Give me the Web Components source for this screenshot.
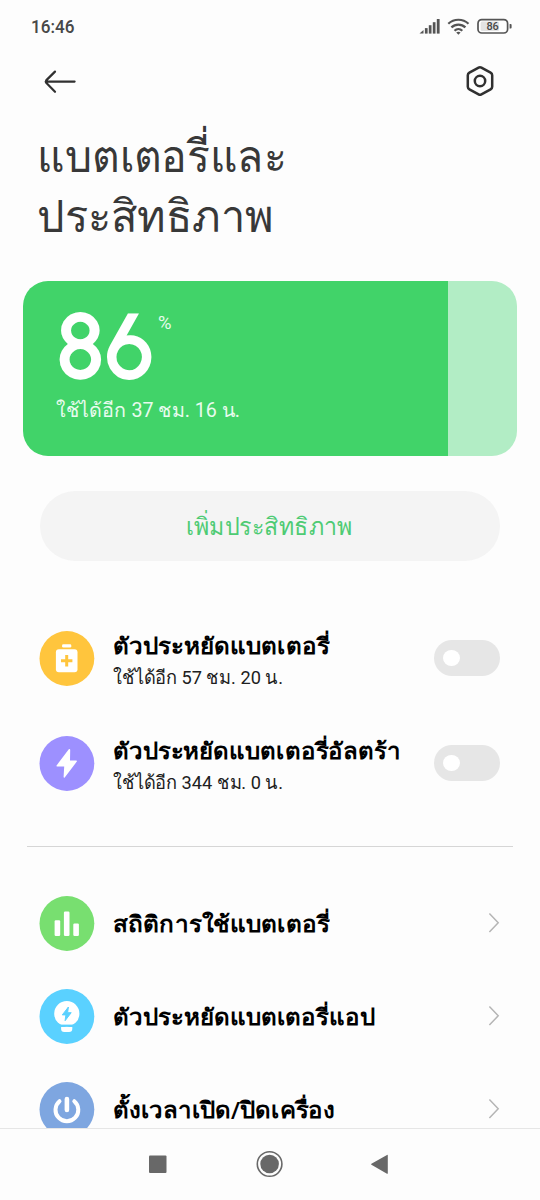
<!DOCTYPE html>
<html lang="th">
<head>
<meta charset="utf-8">
<title>แบตเตอรี่และประสิทธิภาพ</title>
<style>
html,body{margin:0;background:#fdfdfd}
body{width:540px;height:1200px;overflow:hidden;font-family:Roboto,"Noto Sans",sans-serif;color:#000}
</style>
</head>
<body>
<battery-screen></battery-screen>
<script>
const define = (name, html, init) => {
  const t = document.createElement('template');
  t.innerHTML = html;
  customElements.define(name, class extends HTMLElement {
    constructor() {
      super();
      this.attachShadow({mode: 'open'}).appendChild(t.content.cloneNode(true));
    }
    connectedCallback() { if (init) init(this, this.shadowRoot); }
  });
};

/* One line of text, stretched horizontally to the width given in its w attribute. */
define('fit-text', `<style>:host{display:block;white-space:nowrap}span{display:inline-block;transform-origin:0 50%}:host([center]) span{transform-origin:50% 50%}</style><span><slot></slot></span>`,
  (el, root) => {
    const w = +el.getAttribute('w'), s = root.querySelector('span');
    const n = s.getBoundingClientRect().width;
    if (w && n) s.style.transform = `scaleX(${w / n})`;
  });

define('status-bar', `<style>
:host{display:flex;align-items:center;justify-content:space-between;height:54px;padding:0 27px 0 31px;box-sizing:border-box;color:#484848}
.time{font:500 17.5px/20px Roboto,sans-serif}
svg{display:block}
</style>
<fit-text class="time" w="43.5">16:46</fit-text>
<svg width="94" height="20" viewBox="0 0 94 20">
<g fill="#555"><path d="M.5 16.6l4-3.5v3.5z"/><rect x="5.9" y="11.1" width="2.7" height="5.5"/><rect x="9.8" y="8.2" width="2.7" height="8.4"/><rect x="13.8" y="5.2" width="2.7" height="11.4"/><rect x="17.8" y="2" width="2.8" height="14.6"/></g>
<g fill="none" stroke="#555" stroke-width="2.2"><path d="M29.3 6.8a14.6 14.6 0 0 1 20.2 0"/><path d="M32.4 10.4a10 10 0 0 1 14 0"/><path d="M35.5 13.7a5.6 5.6 0 0 1 7.8 0"/></g><path d="M37.2 15.5q2.2-1.4 4.4 0l-2.2 2.2z" fill="#555"/>
<rect x="59" y="2.6" width="29.6" height="13.4" rx="3.8" fill="#fff" stroke="#555" stroke-width="1.7"/><rect x="61.6" y="4.6" width="18.5" height="9.4" rx="1.5" fill="#e3e3e3"/><path d="M90.6 7h1q1 0 1 1v2.6q0 1-1 1h-1z" fill="#555"/>
<text x="73.6" y="13.2" text-anchor="middle" font-family="Roboto" font-weight="500" font-size="10.5" textLength="12.4" lengthAdjust="spacingAndGlyphs" fill="#484848">86</text>
</svg>`);

define('title-bar', `<style>
:host{display:flex;align-items:center;justify-content:space-between;height:54px;padding:0 45px 0 43px}
svg{display:block}
</style>
<svg width="34" height="26" viewBox="0 0 34 26" fill="none" stroke="#303030" stroke-width="2.2" stroke-linecap="round" stroke-linejoin="round"><path d="M31.6 13.6H3M12 3.6L3.2 12.4q-1 1.2 0 2.4L12 23.8"/></svg>
<svg width="30" height="32" viewBox="0 0 30 32" fill="none" stroke="#303030" stroke-width="2.5" stroke-linejoin="round"><path d="M13.6 2.6q1.4-.8 2.8 0l9.2 5q1.6.9 1.6 2.6v11.6q0 1.7-1.6 2.6l-9.2 5q-1.4.8-2.8 0l-9.2-5q-1.6-.9-1.6-2.6V10.2q0-1.7 1.6-2.6z"/><circle cx="15" cy="16" r="5.2"/></svg>`);

define('page-title', `<style>
:host{display:block;padding:19px 0 0 37px;height:154px;font-size:45px;line-height:60px;color:#383838}
</style><fit-text w="249.5">แบตเตอรี่และ</fit-text><fit-text w="237">ประสิทธิภาพ</fit-text>`);

define('battery-card', `<style>
:host{display:block;margin:0 23px;height:175px;border-radius:25px;background:linear-gradient(90deg,#41d369 0 425px,#b2edc5 425px);color:#fff;box-sizing:border-box;padding:20px 33px}
.top{display:flex;align-items:flex-start;height:94px}
.n{font:650 94px/76px Urbanist,Lato,sans-serif;width:102px;padding-top:8px}
.p{font:400 18px/20px Roboto,sans-serif;padding-top:12px;color:#e6fbec}
.s{font-size:19.5px;line-height:32px;color:#e8fbee}
</style><div class="top"><fit-text class="n" w="98">86</fit-text><fit-text class="p" w="13.5">%</fit-text></div><fit-text class="s" w="184">ใช้ได้อีก 37 ชม. 16 น.</fit-text>`);

define('pill-button', `<style>
:host{display:flex;align-items:center;justify-content:center;margin:35px 40px 0;height:70px;border-radius:35px;background:#f4f4f4;color:#4ecb73;font-size:24px;line-height:36px}
fit-text{padding:2px 2px 0 0}
</style><fit-text center w="166"><slot></slot></fit-text>`);

const icons = {
  saver: ['#ffc53d', '<rect x="22.7" y="13.2" width="9.2" height="3.2" rx="1.2" fill="#fff"/><rect x="16.5" y="18.3" width="21.6" height="23" rx="3" fill="#fff"/><path d="M27.3 24v11.4M21.6 29.7H33" stroke="#ffc53d" stroke-width="3"/>'],
  ultra: ['#9d90ff', '<path d="M29.4 13.2L17.2 29.4q-.6 1 .5 1h7.1l-.6 10.6q.3 1.3 1.3.2L37.4 25.6q.6-1-.5-1h-6.3l.2-10.8q-.3-1.4-1.4-.6z" fill="#fff"/>'],
  stats: ['#78df70', '<g fill="#fff"><rect x="15.2" y="24.2" width="5.6" height="15.8" rx="1.2"/><rect x="24.5" y="15.5" width="5.6" height="24.5" rx="1.2"/><rect x="33.9" y="27.6" width="5.6" height="12.4" rx="1.2"/></g>'],
  bulb: ['#5ad1ff', '<circle cx="27.4" cy="24.7" r="12.6" fill="#fff"/><path d="M21.7 38h11.2v1.8q0 3.2-3.2 3.2h-4.8q-3.2 0-3.2-3.2z" fill="#fff"/><path d="M20 36.5h14.5" stroke="#5ad1ff" stroke-width="1.8"/><path d="M29 18l-6.1 7.9h3.6l-.8 5.8 6.1-8h-3.6z" fill="#5ad1ff" stroke="#5ad1ff" stroke-linejoin="round"/>'],
  power: ['#7ea6e0', '<g fill="none" stroke="#fff" stroke-linecap="round"><path d="M20.1 19.2a11.4 11.4 0 1 0 14.8 0" stroke-width="4"/><path d="M27.5 17v11" stroke-width="4.6"/></g>']
};
define('round-icon', `<style>:host{display:block;width:56px;height:55px}svg{display:block}</style><svg width="56" height="55" viewBox="-.4 0 56 55"></svg>`,
  (el, root) => {
    const [c, g] = icons[el.getAttribute('kind')];
    root.querySelector('svg').innerHTML = `<circle cx="27.5" cy="27.5" r="27.4" fill="${c}"/>${g}`;
  });

define('toggle-switch', `<style>:host{display:flex;align-items:center;width:66px;height:36px;border-radius:18px;background:#e6e6e6;box-sizing:border-box;padding-left:9px}i{width:17px;height:16px;border-radius:50%;background:#fff}</style><i></i>`);
define('chevron-right', `<style>:host{display:block}svg{display:block}</style><svg width="16" height="22" viewBox="0 0 16 22" fill="none" stroke="#b5b5b5" stroke-width="1.5"><path d="M5.4 1.6l8.8 9.2L5.4 20"/></svg>`);

define('setting-row', `<style>
:host{display:grid;grid-template-columns:56px 1fr auto;column-gap:17.5px;align-items:center;height:var(--row-h,93px);padding:0 40px 0 39px}
div{padding-top:var(--text-drop,2px)}
::slotted([slot=title]){font-size:22.5px;line-height:34px;font-weight:700}
::slotted([slot=sub]){font-size:18.5px;line-height:30px;color:#202020}
</style><slot name="icon"></slot><div><slot name="title"></slot><slot name="sub"></slot></div><slot name="end"></slot>`);

define('nav-bar', `<style>
:host{display:grid;grid-template-columns:1fr;height:71px;border-top:1px solid #e6e6e6;background:#fdfdfd}
svg{display:block}
</style><svg width="540" height="70" viewBox="0 0 540 70" fill="#686868"><rect x="149" y="26.5" width="17.5" height="17.5" rx="1"/><circle cx="269.6" cy="35" r="9.3"/><circle cx="269.6" cy="35" r="12.3" fill="none" stroke="#686868" stroke-width="1.6"/><path d="M371.4 34.8L387 25.9q.8-.4.8.5v17.8q0 .9-.8.5l-15.6-8.9q-.7-.5 0-1z"/></svg>`);

define('battery-screen', `<style>
:host{display:grid;grid-template-rows:1128px 72px;width:540px;height:1200px;overflow:hidden}
main{overflow:hidden;min-height:0}
.modes{--row-h:105px;--text-drop:6px;padding-top:44.5px}
hr{border:0;height:1px;background:#d6d6d6;margin:30.5px 27px 29.5px}
</style>
<main>
<status-bar></status-bar><title-bar></title-bar><page-title></page-title><battery-card></battery-card>
<pill-button>เพิ่มประสิทธิภาพ</pill-button>
<div class="modes">
<setting-row><round-icon slot="icon" kind="saver"></round-icon><fit-text slot="title" w="217">ตัวประหยัดแบตเตอรี่</fit-text><fit-text slot="sub" w="170">ใช้ได้อีก 57 ชม. 20 น.</fit-text><toggle-switch slot="end"></toggle-switch></setting-row>
<setting-row><round-icon slot="icon" kind="ultra"></round-icon><fit-text slot="title" w="288">ตัวประหยัดแบตเตอรี่อัลตร้า</fit-text><fit-text slot="sub" w="170">ใช้ได้อีก 344 ชม. 0 น.</fit-text><toggle-switch slot="end"></toggle-switch></setting-row>
</div>
<hr>
<setting-row><round-icon slot="icon" kind="stats"></round-icon><fit-text slot="title" w="217">สถิติการใช้แบตเตอรี่</fit-text><chevron-right slot="end"></chevron-right></setting-row>
<setting-row><round-icon slot="icon" kind="bulb"></round-icon><fit-text slot="title" w="262">ตัวประหยัดแบตเตอรี่แอป</fit-text><chevron-right slot="end"></chevron-right></setting-row>
<setting-row><round-icon slot="icon" kind="power"></round-icon><fit-text slot="title" w="222">ตั้งเวลาเปิด/ปิดเครื่อง</fit-text><chevron-right slot="end"></chevron-right></setting-row>
</main>
<nav-bar></nav-bar>`);
</script>
</body>
</html>
